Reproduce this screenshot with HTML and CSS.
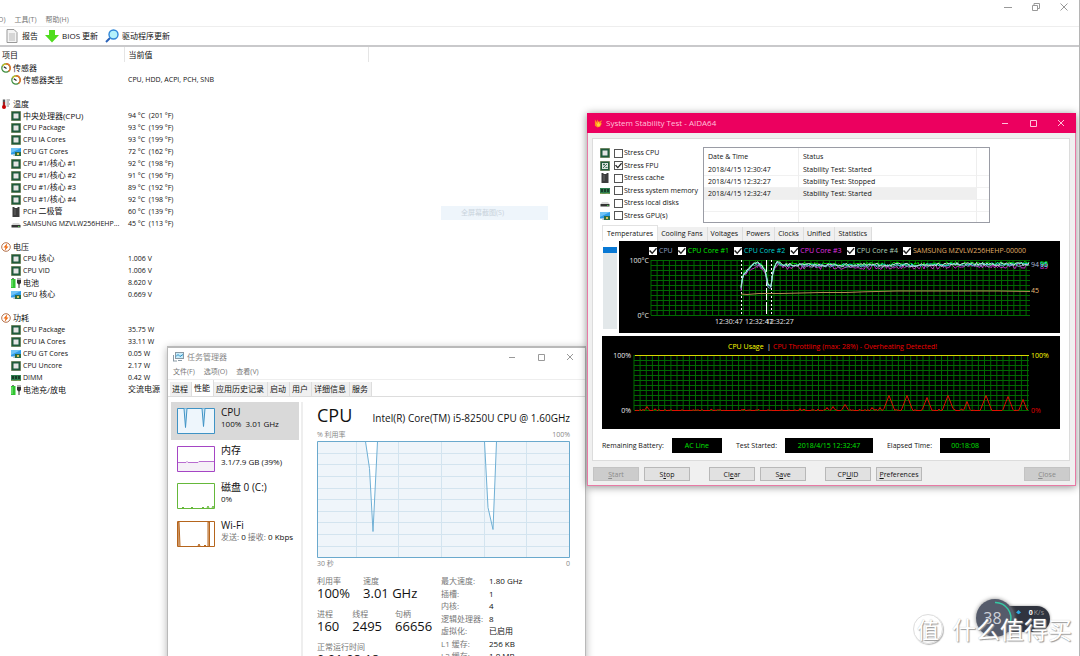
FILE: index.html
```html
<!DOCTYPE html>
<html lang="zh-CN">
<head>
<meta charset="utf-8">
<title>AIDA64</title>
<link rel="stylesheet" href="styles.css">
</head>
<body>
<svg class="defs" aria-hidden="true">
  <symbol id="chip" viewBox="0 0 10 10"><rect width="10" height="10" fill="#b5b08a"/><rect x=".5" y=".5" width="9" height="9" fill="#1f5a3c"/><rect x="2.5" y="2.5" width="5" height="5" fill="#e4e4e4"/></symbol>
  <symbol id="fpu" viewBox="0 0 10 10"><rect width="10" height="10" fill="#b5b08a"/><rect x=".5" y=".5" width="9" height="9" fill="#1f5a3c"/><rect x="2" y="2" width="6" height="6" fill="#dde3df"/><path d="M3 3.5h2M4 2.5v2M3 7l4-4M5.500 6.500h2" stroke="#1f5a3c" stroke-width=".8"/></symbol>
  <symbol id="gpu" viewBox="0 0 10 10"><rect y="1" width="10" height="6.500" fill="#2f9be8"/><path d="M0 1h10L0 6z" fill="#6fc3f7"/><path d="M2 9h5L6 7H3z" fill="#b6c2cc"/><rect x="4" y="5" width="6" height="4" fill="#2c6b46"/><rect x="6" y="6" width="2" height="2" fill="#d8c35a"/></symbol>
  <symbol id="cache" viewBox="0 0 10 10"><path d="M1.500 0h2v1h3V0h2v10h-7z" fill="#3c3c3c"/><path d="M1 2h1M1 4h1M1 6h1M1 8h1M8 2h1M8 4h1M8 6h1M8 8h1" stroke="#999" stroke-width=".7"/><path d="M4 2v6" stroke="#666"/></symbol>
  <symbol id="disk" viewBox="0 0 10 10"><path d="M2 4h6l1.500 2h-9z" fill="#d8d8d8"/><rect x=".5" y="6" width="9" height="2.500" fill="#333"/><rect x="7" y="7" width="1.500" height=".7" fill="#5f5"/></symbol>
  <symbol id="ram" viewBox="0 0 10 10"><rect y="2" width="10" height="6" fill="#2e7d4f"/><path d="M1 3h2v3H1zM4 3h2v3H4zM7 3h2v3H7z" fill="#183c28"/><path d="M0 7.500h10" stroke="#c5b95c" stroke-width=".7" stroke-dasharray=".8 .4"/></symbol>
  <symbol id="battery" viewBox="0 0 10 10"><rect x="1" y="0" width="2" height="1" fill="#777"/><rect x="0" y="1" width="4.500" height="9" fill="#31c331"/><path d="M1 2v7" stroke="#8cf08c"/><path d="M7 0v2M9 0v2" stroke="#333" stroke-width=".8"/><path d="M6 2h4v3L8.500 6.500V10h-1V6.500L6 5z" fill="#333"/></symbol>
  <symbol id="gauge" viewBox="0 0 10 10"><circle cx="5" cy="5" r="4.200" fill="#fff" stroke="#3c8c3c" stroke-width="1.200"/><path d="M5 .8A4.200 4.200 0 0 1 7.500 8.400" fill="none" stroke="#e8702a" stroke-width="1.400"/><path d="M1.500 3A4.200 4.200 0 0 1 5 .8" fill="none" stroke="#d8c020" stroke-width="1.300"/><path d="M5.500 5.500L2.800 3.800" stroke="#222" stroke-width="1.200"/></symbol>
  <symbol id="thermo" viewBox="0 0 10 10"><path d="M3 .5v7" stroke="#555" stroke-width="2.400"/><path d="M3 3v5" stroke="#d00" stroke-width="1.200"/><circle cx="3" cy="8" r="2" fill="#c80000"/><path d="M5.500 1H9M5.500 3H8M5.500 5H9M5.500 7H8" stroke="#555" stroke-width=".7"/></symbol>
  <symbol id="bolt" viewBox="0 0 10 10"><circle cx="5" cy="5" r="4.300" fill="#fff" stroke="#a9633c" stroke-width=".9"/><path d="M6.500 1L2.500 5.500h2L3.500 9l4-4.500h-2z" fill="#f06a10"/></symbol>
</svg>

<main class="aida">
  <header class="caption">
    <button class="win" aria-label="最小化"><svg viewBox="0 0 8 8"><path d="M0 4.500h8"/></svg></button>
    <button class="win" aria-label="还原"><svg viewBox="0 0 8 8"><path d="M.5 2.500h5v5h-5zM2 2.500V.5h5.500v5h-2"/></svg></button>
    <button class="win" aria-label="关闭"><svg viewBox="0 0 8 8"><path d="M.5.5l7 7M7.500.5l-7 7"/></svg></button>
  </header>
  <nav class="menu main-menu"><span>O)</span><span>工具(T)</span><span>帮助(H)</span></nav>
  <div class="toolbar">
    <button><svg viewBox="0 0 14 14"><path d="M2 .5h7l3 3v10H2z" fill="#f4f4f4" stroke="#999"/><path d="M4 5h6M4 7h6M4 9h6M4 11h6" stroke="#b8b8b8"/></svg>报告</button>
    <button><svg viewBox="0 0 14 14"><path d="M4 1h6v5h4l-7 7.500L0 6h4z" fill="#4fdc1e"/></svg>BIOS 更新</button>
    <button><svg viewBox="0 0 14 14"><path d="M1 13l4-4" stroke="#2a62b8" stroke-width="2"/><circle cx="8.500" cy="5.500" r="4.500" fill="#b4f2fb" stroke="#2f86d8" stroke-width="1.400"/></svg>驱动程序更新</button>
  </div>
  <table class="sensors">
    <thead><tr><th>项目</th><th>当前值</th><th></th></tr></thead>
    <tbody>
      <tr class="group"><td><svg><use href="#gauge"/></svg>传感器</td></tr>
      <tr class="zh"><td><svg><use href="#gauge"/></svg>传感器类型</td><td>CPU, HDD, ACPI, PCH, SNB</td></tr>
      <tr class="gap wide"><td></td></tr>
      <tr class="group"><td><svg><use href="#thermo"/></svg>温度</td></tr>
      <tr class="zh"><td><svg><use href="#chip"/></svg>中央处理器(CPU)</td><td>94 °C&nbsp; (201 °F)</td></tr>
      <tr><td><svg><use href="#chip"/></svg>CPU Package</td><td>93 °C&nbsp; (199 °F)</td></tr>
      <tr><td><svg><use href="#chip"/></svg>CPU IA Cores</td><td>93 °C&nbsp; (199 °F)</td></tr>
      <tr><td><svg><use href="#gpu"/></svg>CPU GT Cores</td><td>72 °C&nbsp; (162 °F)</td></tr>
      <tr><td><svg><use href="#chip"/></svg>CPU #1/<em>核心</em> #1</td><td>92 °C&nbsp; (198 °F)</td></tr>
      <tr><td><svg><use href="#chip"/></svg>CPU #1/<em>核心</em> #2</td><td>91 °C&nbsp; (196 °F)</td></tr>
      <tr><td><svg><use href="#chip"/></svg>CPU #1/<em>核心</em> #3</td><td>89 °C&nbsp; (192 °F)</td></tr>
      <tr><td><svg><use href="#chip"/></svg>CPU #1/<em>核心</em> #4</td><td>92 °C&nbsp; (198 °F)</td></tr>
      <tr><td><svg><use href="#cache"/></svg>PCH <em>二极管</em></td><td>60 °C&nbsp; (139 °F)</td></tr>
      <tr><td><svg><use href="#disk"/></svg>SAMSUNG MZVLW256HEHP...</td><td>45 °C&nbsp; (113 °F)</td></tr>
      <tr class="gap"><td></td></tr>
      <tr class="group"><td><svg><use href="#bolt"/></svg>电压</td></tr>
      <tr><td><svg><use href="#chip"/></svg>CPU <em>核心</em></td><td>1.006 V</td></tr>
      <tr><td><svg><use href="#chip"/></svg>CPU VID</td><td>1.006 V</td></tr>
      <tr class="zh"><td><svg><use href="#battery"/></svg>电池</td><td>8.620 V</td></tr>
      <tr><td><svg><use href="#gpu"/></svg>GPU <em>核心</em></td><td>0.669 V</td></tr>
      <tr class="gap"><td></td></tr>
      <tr class="group"><td><svg><use href="#bolt"/></svg>功耗</td></tr>
      <tr><td><svg><use href="#chip"/></svg>CPU Package</td><td>35.75 W</td></tr>
      <tr><td><svg><use href="#chip"/></svg>CPU IA Cores</td><td>33.11 W</td></tr>
      <tr><td><svg><use href="#gpu"/></svg>CPU GT Cores</td><td>0.05 W</td></tr>
      <tr><td><svg><use href="#chip"/></svg>CPU Uncore</td><td>2.17 W</td></tr>
      <tr><td><svg><use href="#ram"/></svg>DIMM</td><td>0.42 W</td></tr>
      <tr class="zh"><td><svg><use href="#battery"/></svg>电池充/放电</td><td><em>交流电源</em></td></tr>
    </tbody>
  </table>
</main>

<div class="ghost">全屏幕截图(S)</div>

<section class="taskmgr">
  <header class="tm-title">
    <svg class="tm-icon" viewBox="0 0 11 10"><rect x="2.500" y=".5" width="8" height="6" fill="#c9ecfa" stroke="#8a9aa5"/><path d="M3 4.500l2-2 2 2 3-2" stroke="#2b8fc4" fill="none"/><path d="M.5 3v6M0 9h4M5 8.500h4" stroke="#8a9aa5"/></svg>
    <span>任务管理器</span>
    <button class="win" aria-label="最小化"><svg viewBox="0 0 8 8"><path d="M1 4.500h6"/></svg></button>
    <button class="win" aria-label="最大化"><svg viewBox="0 0 8 8"><path d="M1.500 1.500h6v6h-6z"/></svg></button>
    <button class="win" aria-label="关闭"><svg viewBox="0 0 8 8"><path d="M1 1l6 6M7 1l-6 6"/></svg></button>
  </header>
  <nav class="menu tm-menu"><span>文件(F)</span><span>选项(O)</span><span>查看(V)</span></nav>
  <nav class="tm-tabs"><button>进程</button><button class="on">性能</button><button>应用历史记录</button><button>启动</button><button>用户</button><button>详细信息</button><button>服务</button></nav>
  <div class="tm-body">
    <ul class="tm-list">
      <li class="on">
        <svg viewBox="0 0 38 26"><path d="M.5.5h37v25H.5z" fill="#eef6fc" stroke="#3f93c5"/><path d="M7 .5l1.500 19L10 .5M25 .5l1.500 18L28 .5" fill="#cfe6f5" stroke="#3f93c5"/></svg>
        <div><b>CPU</b><span>100%&nbsp; 3.01 GHz</span></div>
      </li>
      <li>
        <svg viewBox="0 0 38 26"><path d="M.5.5h37v25H.5z" fill="#fff" stroke="#a545c4"/><path d="M1 16.500h8l1-1 1 1h10l1-1h15V25H1z" fill="#f5f0f7"/><path d="M1 16.500h8l1-1 1 1h10l1-1h15" fill="none" stroke="#b86cd0"/></svg>
        <div><b>内存</b><span>3.1/7.9 GB (39%)</span></div>
      </li>
      <li>
        <svg viewBox="0 0 38 26"><path d="M.5.5h37v25H.5z" fill="#fff" stroke="#65b83a"/><path d="M5 25l1-1 1 1M14 25l1-1 1 1M25 25l1-1 1 1M30 25l1-2 1 2M35 25l1-2 1 2" fill="none" stroke="#65b83a"/></svg>
        <div><b>磁盘 0 (C:)</b><span>0%</span></div>
      </li>
      <li>
        <svg viewBox="0 0 38 26"><path d="M.5.5h37v25H.5z" fill="#fff" stroke="#b5651d"/><path d="M1 25V1h1l1 24M31 25V1h1.500v24M21 25l1-2 1 2M27 25l1-1 1 1" fill="#e8c9ac" stroke="#b5651d"/></svg>
        <div><b>Wi-Fi</b><span><i>发送:</i> 0 <i>接收:</i> 0 Kbps</span></div>
      </li>
    </ul>
    <div class="tm-detail">
      <div class="tm-head"><h1>CPU</h1><h2>Intel(R) Core(TM) i5-8250U CPU @ 1.60GHz</h2></div>
      <div class="ends"><span>% 利用率</span><span>100%</span></div>
      <svg class="tm-graph" viewBox="0 0 253 117">
        <path d="M.5.5h252v116H.5z" fill="#eff5fa"/>
        <path d="M48.500.5l4 27 3.500 63L60.500.5zM167.500.5l3.500 66 5 22L179.500.5z" fill="#fff"/>
        <path d="M39.500 1v115M81.500 1v115M124.500 1v115M167.500 1v115M209.500 1v115M1 12.500h251M1 23.500h251M1 35.500h251M1 47.500h251M1 58.500h251M1 70.500h251M1 81.500h251M1 93.500h251M1 105.500h251" stroke="#d3e4ef" fill="none"/>
        <path d="M48.500.5l4 27 3.500 63L60.500.5M167.500.5l3.500 66 5 22L179.500.5" fill="none" stroke="#6fafd4"/>
        <path d="M.5.5h252v116H.5z" fill="none" stroke="#6aa9cd"/>
      </svg>
      <div class="ends"><span>30 秒</span><span>0</span></div>
      <div class="stats">
        <div class="stats-main">
          <dl><div><dt>利用率</dt><dd>100%</dd></div><div><dt>速度</dt><dd>3.01 GHz</dd></div></dl>
          <dl><div><dt>进程</dt><dd>160</dd></div><div><dt>线程</dt><dd>2495</dd></div><div><dt>句柄</dt><dd>66656</dd></div></dl>
          <dl><div><dt>正常运行时间</dt><dd>0:01:08:18</dd></div></dl>
        </div>
        <dl class="stats-side">
          <dt>最大速度:</dt><dd>1.80 GHz</dd><dt>插槽:</dt><dd>1</dd><dt>内核:</dt><dd>4</dd><dt>逻辑处理器:</dt><dd>8</dd><dt>虚拟化:</dt><dd>已启用</dd><dt>L1 缓存:</dt><dd>256 KB</dd><dt>L2 缓存:</dt><dd>1.0 MB</dd>
        </dl>
      </div>
    </div>
  </div>
</section>

<section class="stability">
  <header class="st-title">
    <svg class="flame" viewBox="0 0 10 10"><path d="M1 1l2 3 1-3 1 3 4-2-2 4 2-1-2 4-3 1-3-2z" fill="#ff8a1c"/><path d="M2 4l2 2 1-3 1 3 2-1-2 4H4z" fill="#ffd23c"/></svg>
    <span>System Stability Test - AIDA64</span>
    <button class="win" aria-label="Minimize"><svg viewBox="0 0 8 8"><path d="M1 4.500h6"/></svg></button>
    <button class="win" aria-label="Maximize"><svg viewBox="0 0 8 8"><path d="M1.500 1.500h6v6h-6z"/></svg></button>
    <button class="win" aria-label="Close"><svg viewBox="0 0 8 8"><path d="M1 1l6 6M7 1l-6 6"/></svg></button>
  </header>
  <div class="panel">
    <div class="st-top">
      <div class="stress">
        <label><svg><use href="#chip"/></svg><input type="checkbox">Stress CPU</label>
        <label><svg><use href="#fpu"/></svg><input type="checkbox" checked>Stress FPU</label>
        <label><svg><use href="#cache"/></svg><input type="checkbox">Stress cache</label>
        <label><svg><use href="#ram"/></svg><input type="checkbox">Stress system memory</label>
        <label><svg><use href="#disk"/></svg><input type="checkbox">Stress local disks</label>
        <label><svg><use href="#gpu"/></svg><input type="checkbox">Stress GPU(s)</label>
      </div>
      <table class="log">
        <thead><tr><th>Date &amp; Time</th><th>Status</th><th></th></tr></thead>
        <tbody>
          <tr><td>2018/4/15 12:30:47</td><td>Stability Test: Started</td><td></td></tr>
          <tr><td>2018/4/15 12:32:27</td><td>Stability Test: Stopped</td><td></td></tr>
          <tr class="sel"><td>2018/4/15 12:32:47</td><td>Stability Test: Started</td><td></td></tr>
          <tr><td></td><td></td><td></td></tr>
          <tr class="rest"><td></td><td></td><td></td></tr>
        </tbody>
      </table>
    </div>
    <nav class="st-tabs"><button class="on">Temperatures</button><button>Cooling Fans</button><button>Voltages</button><button>Powers</button><button>Clocks</button><button>Unified</button><button>Statistics</button></nav>
    <div class="temp">
      <div class="slider"></div>
      <div class="screen">
        <div class="legend">
          <label class="c0"><input type="checkbox" checked>CPU</label>
          <label class="c1"><input type="checkbox" checked>CPU Core #1</label>
          <label class="c2"><input type="checkbox" checked>CPU Core #2</label>
          <label class="c3"><input type="checkbox" checked>CPU Core #3</label>
          <label class="c4"><input type="checkbox" checked>CPU Core #4</label>
          <label class="c5"><input type="checkbox" checked>SAMSUNG MZVLW256HEHP-00000</label>
        </div>
        <svg class="plot" viewBox="0 0 441 77">
          <path id="temp-grid" class="grid"/>
          <path d="M122.500 4v55M152.500 4v55" stroke="#fff" stroke-dasharray="2 2"/>
          <path d="M147.500 4v55" stroke="#fff" stroke-dasharray="12 2"/>
          <g id="temp-lines" fill="none"></g>
          <path d="M122 38l6 .5 12-1h22l40-1h25l18-.7 33-.8h100l33 .5" fill="none" stroke="#b08a50"/>
          <g fill="#e8e8e8"><text x="30" y="7" text-anchor="end">100°C</text><text x="30" y="62" text-anchor="end">0°C</text>
          <text x="96" y="68">12:30:47</text><text x="126" y="68">12:32:47</text><text x="147" y="68">12:32:27</text></g>
          <text x="412" y="11" fill="#a8b8d8">94</text><text x="421" y="10" fill="#0f0">96</text><text x="421" y="13" fill="#e040e0">89</text><text x="421" y="11" fill="#4ee">95</text><text x="412" y="37" fill="#e8bd78">45</text>
        </svg>
      </div>
    </div>
    <div class="screen">
      <svg class="plot" viewBox="0 0 458 93">
        <text x="126" y="13" fill="#ff0">CPU Usage</text><text x="165" y="13" fill="#fff">|</text><text x="171" y="13" fill="#f00000">CPU Throttling (max: 28%) - Overheating Detected!</text>
        <path id="use-grid" class="grid"/>
        <path d="M33 19.500h394" stroke="#d8d800"/>
        <path id="throttle" fill="none" stroke="#e01000"/>
        <text x="29" y="22" text-anchor="end" fill="#eee">100%</text><text x="29" y="77" text-anchor="end" fill="#eee">0%</text>
        <text x="429" y="22" fill="#ff0">100%</text><text x="429" y="77" fill="#e00000">0%</text>
      </svg>
    </div>
    <div class="status">
      <span>Remaining Battery:</span><output class="w50">AC Line</output>
      <span>Test Started:</span><output class="w88">2018/4/15 12:32:47</output>
      <span>Elapsed Time:</span><output class="w50">00:18:08</output>
    </div>
  </div>
  <footer class="actions">
    <button disabled><u>S</u>tart</button><button>S<u>t</u>op</button>
    <button class="next">Cl<u>e</u>ar</button><button>S<u>a</u>ve</button>
    <button class="next">CP<u>U</u>ID</button><button><u>P</u>references</button>
    <button class="last" disabled><u>C</u>lose</button>
  </footer>
</section>

<aside class="meter">
  <div class="pill"><svg viewBox="0 0 6 6"><path d="M3 0l3 3-3 2-3-2z" fill="#2fa8e0"/></svg><b>0</b>K/s</div>
  <div class="ball"><svg viewBox="0 0 38 38"><path d="M19 3.500A15.500 15.500 0 0 1 34 24" fill="none" stroke="#35c9a4" stroke-width="1.500"/></svg><span>38</span></div>
</aside>
<div class="mark"><span class="seal">值</span><span>什么值得买</span></div>
<script src="charts.js"></script>
</body>
</html>
```

FILE: styles.css
```css
* { box-sizing: border-box; }
body {
  margin: 0;
  position: relative;
  min-height: 100vh;
  overflow: hidden;
  background: #fff;
  color: #111;
  font: 7px/12px "Open Sans", "Noto Sans CJK SC", sans-serif;
}
button { font: inherit; color: inherit; border: 0; padding: 0; background: none; white-space: nowrap; }
h1, h2, ul, dl, dd { margin: 0; padding: 0; font-weight: 400; }
svg { flex: none; }
.defs { position: absolute; width: 0; height: 0; }
.win { width: 8px; height: 8px; display: flex; }
.win svg { width: 8px; height: 8px; fill: none; stroke: currentColor; stroke-width: 1; }

/* main window */
.aida { min-height: 100vh; border-right: 1px solid #b5b5b5; }
.caption { display: flex; justify-content: flex-end; gap: 20px; padding: 3px 11px 3px 0; color: #999; }
.menu { display: flex; color: #777; white-space: nowrap; }
.main-menu { gap: 9px; margin-left: -2px; border-bottom: 1px solid #eee; }
.toolbar { display: flex; gap: 7px; padding: 2px 5px; height: 20px; border-bottom: 2px solid #c9c9cb; font-size: 8px; }
.toolbar button { display: flex; align-items: center; gap: 3px; }
.toolbar svg { width: 14px; height: 14px; }
.sensors { width: 100%; table-layout: fixed; border-collapse: collapse; }
.sensors th { height: 15px; padding: 0 4px; font-weight: 400; font-size: 8px; text-align: left; border-right: 1px solid #e5e5e5; }
.sensors th:first-child { width: 124px; padding-left: 2px; }
.sensors th:nth-child(2) { width: 244px; }
.sensors th:last-child { border: 0; }
.sensors td { height: 12px; padding: 0 0 0 4px; white-space: nowrap; }
.sensors td:first-child { padding-left: 11px; }
.sensors .group td:first-child { padding-left: 1px; }
.sensors .group, .sensors .zh td:first-child, .sensors em { font-size: 8px; font-style: normal; line-height: 10px; }
.sensors .gap td { height: 11px; }
.sensors .wide td { height: 12px; }
.sensors svg { width: 10px; height: 10px; margin-right: 2px; vertical-align: middle; }
.ghost { position: absolute; left: 441px; top: 206px; width: 107px; line-height: 14px; padding-left: 20px; background: #eef5fb; color: #c9d3dc; }

/* task manager */
.taskmgr { position: absolute; left: 167px; top: 346px; width: 419px; background: #fff; border: 1px solid #b9b9b9; border-top-width: 2px; box-shadow: 0 2px 8px rgba(0,0,0,.3); }
.tm-title { display: flex; align-items: center; gap: 21px; height: 17px; padding: 0 11px 0 5px; color: #999; }
.tm-title span { margin-right: auto; margin-left: -18px; font-size: 8px; color: #888; }
.tm-icon { width: 11px; height: 10px; }
.tm-menu { gap: 9px; padding: 1px 5px; border-bottom: 1px solid #eee; }
.tm-tabs { display: flex; align-items: flex-end; height: 17px; padding-left: 2px; border-bottom: 1px solid #ddd; }
.tm-tabs button { height: 14px; padding: 0 3px 0 2px; background: #f0f0f0; border-right: 1px solid #ddd; font-size: 8px; }
.tm-tabs .on { height: 16px; background: #fff; }
.tm-body { display: flex; padding: 5px 15px 0 3px; }
.tm-list { width: 132px; flex: none; list-style: none; border-right: 2px solid #eee; }
.tm-list li { display: flex; gap: 6px; width: 128px; height: 38px; padding: 6px; }
.tm-list li:nth-child(even) { height: 37px; }
.tm-list .on { background: #d9d9d9; }
.tm-list li > svg { width: 38px; height: 26px; }
.tm-list div { white-space: nowrap; }
.tm-list b, .tm-list span { display: block; font-weight: 400; }
.tm-list b { font-size: 10px; line-height: 9px; margin-bottom: 1px; }
.tm-list span { font-size: 8px; }
.tm-list i { font-style: normal; color: #777; }
.tm-detail { flex: 1; padding-left: 14px; }
.tm-head { display: flex; align-items: baseline; justify-content: space-between; height: 27px; white-space: nowrap; }
.tm-head h1 { font-size: 18px; line-height: 27px; }
.tm-head h2 { font-size: 10px; }
.ends { display: flex; justify-content: space-between; color: #888; }
.tm-graph { display: block; width: 100%; }
.stats { display: flex; margin-top: 5px; font-size: 8px; }
.stats-main { width: 124px; flex: none; }
.stats-main dl { display: flex; gap: 13px; height: 33px; }
.stats dt { color: #777; line-height: 11px; white-space: nowrap; }
.stats-main dd { font-size: 13px; line-height: 15px; white-space: nowrap; }
.stats-side { display: grid; grid-template-columns: 48px 1fr; align-content: space-between; height: 86px; }
.stats-side dd { line-height: 11px; }

/* stability test */
.stability { position: absolute; left: 587px; top: 113px; width: 489px; background: #f0f0f0; border: 1px solid #e87aa5; box-shadow: 0 1px 8px rgba(0,0,0,.45); padding-bottom: 4px; }
.st-title { display: flex; align-items: center; gap: 20px; height: 20px; margin: -1px -1px 0; padding: 0 11px 0 7px; background: #ec005f; color: #ffc2da; }
.st-title span { margin-right: auto; margin-left: -17px; font-size: 8px; }
.flame { width: 9px; height: 10px; }
.panel { margin: 5px 5px 6px 4px; padding: 8px 9px 7px 9px; background: #fff; border: 1px solid #dcdcdc; }
.st-top { display: flex; gap: 4px; padding-right: 70px; }
.stress { display: flex; flex-direction: column; justify-content: space-between; width: 97px; height: 75px; }
.stress label { display: flex; align-items: center; height: 12px; white-space: nowrap; }
.stress svg { width: 10px; height: 10px; margin: 0 4px 0 -2px; }
input { appearance: none; flex: none; width: 9px; height: 9px; margin: 0 1px 0 0; border: 1px solid #555; background: #fff; display: grid; }
input:checked::after { content: ""; background: #222; clip-path: polygon(0 50%, 15% 38%, 40% 65%, 88% 10%, 100% 22%, 40% 90%); }
.log { flex: 1; table-layout: fixed; border-collapse: separate; border-spacing: 0; border: 1px solid #9a9ca5; }
.log th, .log td { height: 12px; padding: 0 4px; font-weight: 400; text-align: left; line-height: 11px; border-right: 1px solid #eee; border-bottom: 1px solid #f1f1f1; white-space: nowrap; }
.log th { height: 16px; border-bottom: 0; }
.log .rest td { height: 10px; border-bottom: 0; }
.log th:last-child, .log td:last-child { border-right: 0; }
.log th:first-child { width: 95px; }
.log th:last-child { width: 12px; }
.log .sel td:not(:last-child) { background: #efefef; }
.st-tabs { display: flex; align-items: flex-end; height: 18px; }
.st-tabs button { height: 14px; padding: 0 4px 0 3px; background: #f0f0f0; border-right: 1px solid #ddd; }
.st-tabs .on { height: 16px; padding: 0 4px; background: #fff; border: 1px solid #e2e2e2; border-bottom: 0; }
.temp { display: flex; margin-bottom: 3px; }
.slider { width: 14px; margin: 6px 2px 4px 1px; background: #e3e8ea; border-top: 6px solid #0878d4; flex: none; }
.screen { flex: 1; background: #000; }
.legend { display: flex; gap: 5px; padding: 4px 0 0 30px; height: 15px; white-space: nowrap; }
.legend label { display: flex; align-items: center; height: 12px; }
.legend input { width: 8px; height: 8px; margin-right: 2px; border: 0; }
.c0 { color: #8c9cc0; } .c1 { color: #00e800; } .c2 { color: #00d0d0; } .c3 { color: #e030e0; } .c4 { color: #b0d0b8; } .c5 { color: #e0b068; }
.plot { display: block; width: 100%; }
.grid { fill: none; stroke: #006a00; stroke-width: 1; }
.status { display: flex; align-items: center; padding: 9px 0 0; white-space: nowrap; }
.status output { line-height: 15px; margin: 0 14px 0 8px; background: #000; color: #00e000; text-align: center; }
.w50 { width: 50px; }
.w88 { width: 88px; }
.actions { display: flex; gap: 5px; padding: 0 5px; }
.actions button { width: 46px; height: 14px; line-height: 11px; background: #e1e1e1; border: 1px solid #b8b8b8; }
.actions button:disabled { background: #ccc; border-color: #c3c3c3; color: #8b8b8b; }
.actions .next { margin-left: 14px; }
.actions .last { margin-left: auto; }

/* network meter and watermark */
.meter { position: absolute; left: 976px; top: 599px; width: 76px; height: 38px; }
.pill { position: absolute; left: 18px; right: 2px; top: 7px; height: 26px; padding: 1px 6px 0 22px; display: flex; gap: 1px; border-radius: 13px; background: #30343f; color: #999; box-shadow: 0 0 3px #999; }
.pill svg { width: 5px; height: 5px; margin: 3px auto 0 0; }
.pill b { color: #fff; }
.ball { position: absolute; width: 38px; height: 38px; border-radius: 50%; background: #555b6b; box-shadow: 0 0 4px #888; color: #cdd0d8; font-size: 16px; line-height: 38px; text-align: center; }
.ball svg { position: absolute; inset: 0; }
.ball span { display: block; margin-right: 5px; }
.mark { position: absolute; left: 913px; top: 612px; display: flex; align-items: center; gap: 9px; color: #fff; font: 24px/34px "Noto Sans CJK SC", sans-serif; white-space: nowrap; text-shadow: 1px 1px 1px #999, 0 0 1px #bbb; }
.seal { width: 30px; height: 30px; border: 1px solid #ddd; border-radius: 50%; font-size: 22px; line-height: 27px; text-align: center; box-shadow: 1px 1px 1px #bbb; }
```

FILE: charts.js
```js
const grid = (x0, x1, y0, y1) => {
  let d = "";
  for (let x = x0; x <= x1; x += 6.15) d += `M${x.toFixed(1)} ${y0}V${y1}`;
  for (let y = y0 + 0.5; y <= y1 + 1; y += 5) d += `M${x0} ${y}H${x1}`;
  return d;
};
document.getElementById("temp-grid").setAttribute("d", grid(32, 411, 4, 59));
document.getElementById("use-grid").setAttribute("d", grid(32, 427, 19, 74));

let seed = 7;
const rnd = () => (seed = (seed * 16807) % 2147483647) / 2147483647;

const base = [[122, 32], [124, 18], [128, 15], [133, 9], [139, 7], [145, 12], [147, 14], [148, 29], [152, 30], [154, 15], [158, 6], [163, 9], [410, 9]];
const level = (x) => {
  const i = Math.max(1, base.findIndex((p) => p[0] >= x));
  const [a, b] = [base[i - 1], base[i]];
  return a[1] + ((b[1] - a[1]) * (x - a[0])) / (b[0] - a[0]);
};
const lines = document.getElementById("temp-lines");
[["#00d800", -1, 2], ["#c030c0", 2, 3], ["#7f90c8", 1, 2], ["#20d8d8", 0, 1.5], ["#c0e8d0", 0, 2]].forEach(([color, shift, noise]) => {
  let d = "";
  for (let x = 122; x <= 410; x += 1.5) {
    const y = level(x) + shift + (rnd() - 0.5) * noise * 1.6 - (x > 330 ? 1 : 0);
    d += (d ? "L" : "M") + x + " " + y.toFixed(1);
  }
  const p = document.createElementNS("http://www.w3.org/2000/svg", "path");
  p.setAttribute("d", d);
  p.setAttribute("stroke", color);
  lines.append(p);
});

const peaks = [[45, 4], [198, 2], [225, 3], [231, 4], [243, 6], [270, 3], [278, 3], [287, 15], [305, 15], [325, 13], [346, 15], [365, 9], [384, 15], [406, 14], [421, 11]];
let d = "M33 74.5";
for (let x = 34; x <= 426; x += 1) {
  let h = rnd() > 0.75 ? rnd() * 1.5 : 0;
  for (const [px, ph] of peaks) h = Math.max(h, ph - Math.abs(x - px) * (ph > 8 ? 2.6 : 1.6));
  d += `L${x} ${(74.5 - h).toFixed(1)}`;
}
document.getElementById("throttle").setAttribute("d", d);
```
